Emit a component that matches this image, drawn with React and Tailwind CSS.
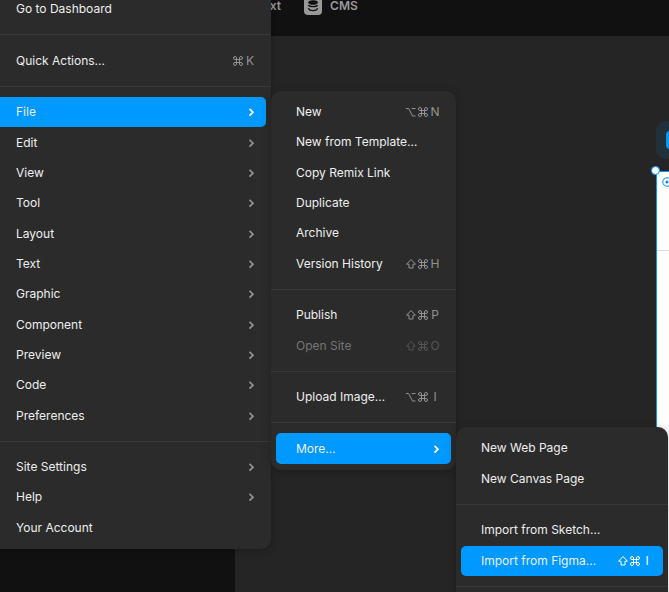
import React from 'react';
import clsx from 'clsx';

const mainMenu = [
  { height: 'h-[30px]', items: [{ label: 'Go to Dashboard' }] },
  { height: 'h-[31px]', items: [{ label: 'Quick Actions…', keys: ['cmd', 'K'] }] },
  {
    height: 'h-[334px]',
    items: [
      { label: 'File', submenu: true, active: true },
      { label: 'Edit', submenu: true },
      { label: 'View', submenu: true },
      { label: 'Tool', submenu: true },
      { label: 'Layout', submenu: true },
      { label: 'Text', submenu: true },
      { label: 'Graphic', submenu: true },
      { label: 'Component', submenu: true },
      { label: 'Preview', submenu: true },
      { label: 'Code', submenu: true },
      { label: 'Preferences', submenu: true },
    ],
  },
  {
    height: 'h-[91px]',
    items: [
      { label: 'Site Settings', submenu: true },
      { label: 'Help', submenu: true },
      { label: 'Your Account' },
    ],
  },
];

const fileMenu = [
  {
    height: 'h-[182px]',
    items: [
      { label: 'New', keys: ['option', 'cmd', 'N'] },
      { label: 'New from Template…' },
      { label: 'Copy Remix Link' },
      { label: 'Duplicate' },
      { label: 'Archive' },
      { label: 'Version History', keys: ['shift', 'cmd', 'H'] },
    ],
  },
  {
    height: 'h-[61px]',
    items: [
      { label: 'Publish', keys: ['shift', 'cmd', 'P'] },
      { label: 'Open Site', keys: ['shift', 'cmd', 'O'], disabled: true },
    ],
  },
  { height: 'h-[30px]', items: [{ label: 'Upload Image…', keys: ['option', 'cmd', 'I'] }] },
  { height: 'h-[31px]', items: [{ label: 'More…', submenu: true, active: true }] },
];

const moreMenu = [
  { height: 'h-[61px]', items: [{ label: 'New Web Page' }, { label: 'New Canvas Page' }] },
  {
    height: 'h-[61px]',
    items: [
      { label: 'Import from Sketch…' },
      { label: 'Import from Figma…', keys: ['shift', 'cmd', 'I'], active: true },
    ],
  },
  { height: 'h-[30px]', items: [] },
];

const keyPaths = {
  cmd: 'M4.5 4.5V3A1.5 1.5 0 1 0 3 4.5H9A1.5 1.5 0 1 0 7.5 3V9A1.5 1.5 0 1 0 9 7.5H3A1.5 1.5 0 1 0 4.5 9Z',
  option: 'M1 2.5H3.7L7.5 10H10.5M6.7 2.5H10.5',
  shift: 'M6 1.5L10.4 6.2H8V10H4V6.2H1.6Z',
};

const KeyCap = ({ name }) => (
  <span className="flex w-3 justify-center">
    {keyPaths[name] ? (
      <svg className="h-3 w-3" viewBox="0 0 12 12" fill="none" stroke="currentColor">
        <path d={keyPaths[name]} />
      </svg>
    ) : (
      name
    )}
  </span>
);

const MenuItem = ({ label, keys, submenu, active, disabled }) => (
  <button
    type="button"
    disabled={disabled}
    className={clsx(
      'flex w-full flex-1 items-center justify-between rounded-[5px] pl-5 pr-[10px] text-left',
      active && 'bg-[#0099ff]',
      disabled ? 'text-[#757575]' : 'text-[#eeeeee]'
    )}
  >
    <span>{label}</span>
    {keys && (
      <span
        className={clsx(
          'flex items-center',
          active ? 'text-white' : disabled ? 'text-[#555555]' : 'text-[#929292]'
        )}
      >
        {keys.map((key) => (
          <KeyCap key={key} name={key} />
        ))}
      </span>
    )}
    {submenu && (
      <svg
        className={clsx('h-[10px] w-[10px]', active ? 'text-white' : 'text-[#929292]')}
        viewBox="0 0 10 10"
        fill="none"
        stroke="currentColor"
        strokeWidth="1.7"
      >
        <path d="M3.5 1.8L7 5.2L3.5 8.6" />
      </svg>
    )}
  </button>
);

const Menu = ({ groups, className }) => (
  <nav
    className={clsx(
      'absolute divide-y divide-[#383838] rounded-[10px] bg-[#2b2b2b] shadow-[0_2px_8px_rgba(0,0,0,0.25)]',
      className
    )}
  >
    {groups.map((group, i) => (
      <div key={i} className="px-[5px] py-[10px] first:pt-[6px] last:pb-[6px]">
        <div className={clsx('flex flex-col', group.height)}>
          {group.items.map((item) => (
            <MenuItem key={item.label} {...item} />
          ))}
        </div>
      </div>
    ))}
  </nav>
);

const Toolbar = () => (
  <header className="flex h-9 items-start bg-[#111111] pl-64 text-[#999999]">
    <div className="flex h-3 items-center font-semibold leading-3">
      <span>Text</span>
      <span className="ml-[23px] flex h-[18px] w-[18px] items-center justify-center rounded bg-[#999999]">
        <svg className="h-3 w-3" viewBox="0 0 12 12" fill="none" stroke="#111111" strokeWidth="1.3">
          <ellipse cx="6" cy="2.5" rx="4.2" ry="1.7" fill="#111111" />
          <path d="M1.5 5C2 7.2 10 7.2 10.5 5M1.5 8.2C2 11.5 10 11.5 10.5 8.2" />
        </svg>
      </span>
      <span className="ml-2">CMS</span>
    </div>
  </header>
);

const Canvas = () => (
  <main className="relative flex-1 overflow-hidden bg-[#252525]">
    <div className="absolute left-[421px] top-[85px] h-[38px] w-20 rounded-[10px] bg-[#22303a]">
      <div className="ml-[10px] mt-[10px] h-[18px] w-[18px] rounded bg-[#0099ff]" />
    </div>
    <div className="absolute left-[421px] top-[135px] h-[600px] w-[600px] border border-[#0099ff] bg-white">
      <div className="h-[79px] border-b border-[#dddddd] pl-[5px] pt-[5px]">
        <svg className="h-[10px] w-[10px]" viewBox="0 0 10 10" fill="none" stroke="#0088ee">
          <circle cx="5" cy="5" r="4.2" />
          <circle cx="5" cy="5" r="1.5" fill="#0088ee" stroke="none" />
        </svg>
      </div>
    </div>
    <div className="absolute left-[416px] top-[130px] h-[9px] w-[9px] rounded-full border border-[#0099ff] bg-white" />
  </main>
);

const App = () => {
  return (
    <div className="relative flex h-screen flex-col overflow-hidden bg-[#252525] font-['Inter',sans-serif] text-[12px] leading-4">
      <Toolbar />
      <div className="flex flex-1">
        <aside className="w-[235px] bg-[#111111]" />
        <Canvas />
      </div>
      <Menu groups={mainMenu} className="-left-[9px] -top-[12px] w-[280px]" />
      <Menu groups={fileMenu} className="left-[271px] top-[91px] w-[185px]" />
      <Menu groups={moreMenu} className="left-[456px] top-[427px] w-[212px]" />
    </div>
  );
};

export default App;
